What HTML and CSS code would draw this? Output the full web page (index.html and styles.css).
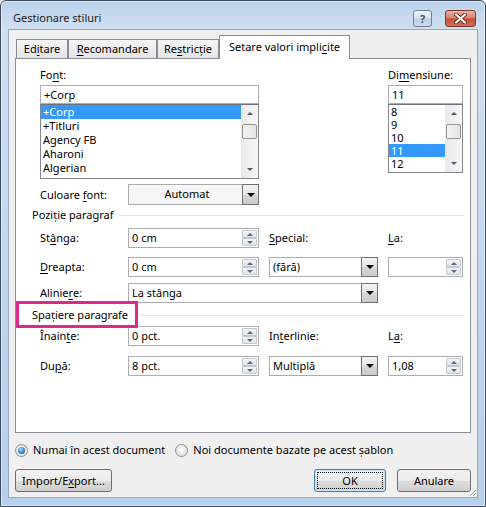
FILE: index.html
```html
<!DOCTYPE html>
<html lang="ro">
<head>
  <meta charset="UTF-8" />
  <title>Gestionare stiluri</title>
  <link rel="stylesheet" href="styles.css">
</head>
<body>
  <div class="window">
    <div class="titlebar">
      <span class="title">Gestionare stiluri</span>
      <span class="cap help">?</span>
      <span class="cap close">
        <svg width="13" height="11" viewBox="0 0 13 11">
          <path d="M2 1.5 L11 9.5 M11 1.5 L2 9.5" stroke="#6b2a22" stroke-width="4" stroke-linecap="round"/>
          <path d="M2 1.5 L11 9.5 M11 1.5 L2 9.5" stroke="#fff" stroke-width="2.2" stroke-linecap="round"/>
        </svg>
      </span>
    </div>

    <div class="client">
      <div class="tabs">
        <div class="tab t1">Ed<u>i</u>tare</div>
        <div class="tab t2"><u>R</u>ecomandare</div>
        <div class="tab t3">Re<u>s</u>tricție</div>
        <div class="tab t4 active">Setare valori impli<u>c</u>ite</div>
      </div>

      <div class="panel">
        <div class="grid fontarea">
          <div class="fontcol">
            <div class="lbl">Fo<u>n</u>t:</div>
            <div class="textbox">+Corp</div>
            <div class="listbox big">
              <ul>
                <li class="sel">+Corp</li>
                <li>+Titluri</li>
                <li>Agency FB</li>
                <li>Aharoni</li>
                <li>Algerian</li>
              </ul>
              <div class="vscroll">
                <span class="sb-btn"><i class="tri-up"></i></span>
                <span class="thumb"></span>
                <span class="sb-btn down"><i class="tri-down"></i></span>
              </div>
            </div>
          </div>
          <div class="sizecol">
            <div class="lbl">Di<u>m</u>ensiune:</div>
            <div class="textbox">11</div>
            <div class="listbox small">
              <ul>
                <li>8</li>
                <li>9</li>
                <li>10</li>
                <li class="sel">11</li>
                <li>12</li>
              </ul>
              <div class="vscroll">
                <span class="sb-btn"><i class="tri-up"></i></span>
                <span class="thumb"></span>
                <span class="sb-btn down"><i class="tri-down"></i></span>
              </div>
            </div>
          </div>
        </div>

        <div class="grid row color-row">
          <div class="lbl">Culoare <u>f</u>ont:</div>
          <div class="combo plain"><span class="val">Automat</span><span class="arrow"><i class="tri-down dark"></i></span></div>
        </div>

        <div class="group">Poziție paragraf</div>

        <div class="grid row r-stanga">
          <div class="lbl">St<u>â</u>nga:</div>
          <div class="spin"><span class="val">0 cm</span><span class="spinbtns"><span><i class="tri-up sm"></i></span><span><i class="tri-down sm"></i></span></span></div>
          <div class="lbl"><u>S</u>pecial:</div>
          <div class="lbl"><u>L</u>a:</div>
        </div>

        <div class="grid row r-dreapta">
          <div class="lbl"><u>D</u>reapta:</div>
          <div class="spin"><span class="val">0 cm</span><span class="spinbtns"><span><i class="tri-up sm"></i></span><span><i class="tri-down sm"></i></span></span></div>
          <div class="combo"><span class="val">(fără)</span><span class="arrow"><i class="tri-down dark"></i></span></div>
          <div class="spin"><span class="val"></span><span class="spinbtns"><span><i class="tri-up sm"></i></span><span><i class="tri-down sm"></i></span></span></div>
        </div>

        <div class="grid row r-aliniere">
          <div class="lbl">Alinie<u>r</u>e:</div>
          <div class="combo wide"><span class="val">La stânga</span><span class="arrow"><i class="tri-down dark"></i></span></div>
        </div>

        <div class="group spacing">
          <span class="group-text">Spațiere paragrafe</span>
          <span class="mark"></span>
        </div>

        <div class="grid row r-inainte">
          <div class="lbl">Înain<u>t</u>e:</div>
          <div class="spin"><span class="val">0 pct.</span><span class="spinbtns"><span><i class="tri-up sm"></i></span><span><i class="tri-down sm"></i></span></span></div>
          <div class="lbl">In<u>t</u>erlinie:</div>
          <div class="lbl">L<u>a</u>:</div>
        </div>

        <div class="grid row r-dupa">
          <div class="lbl">Du<u>p</u>ă:</div>
          <div class="spin"><span class="val">8 pct.</span><span class="spinbtns"><span><i class="tri-up sm"></i></span><span><i class="tri-down sm"></i></span></span></div>
          <div class="combo"><span class="val">Multiplă</span><span class="arrow"><i class="tri-down dark"></i></span></div>
          <div class="spin"><span class="val">1,08</span><span class="spinbtns"><span><i class="tri-up sm"></i></span><span><i class="tri-down sm"></i></span></span></div>
        </div>
      </div>

      <div class="options">
        <span class="radio on"><span class="dot"></span></span>
        <span class="opt-text">Numai în acest document</span>
        <span class="radio second"></span>
        <span class="opt-text">Noi documente bazate pe acest șablon</span>
      </div>

      <div class="actions">
        <button class="btn import">Import/E<u>x</u>port...</button>
        <button class="btn ok">OK</button>
        <button class="btn cancel">Anulare</button>
      </div>

      <svg class="grip" width="8" height="8" viewBox="0 0 8 8">
        <path d="M7 1 L1 7 M7 4 L4 7" stroke="#a0a8b4" stroke-width="1"/>
      </svg>
    </div>
  </div>
</body>
</html>
```

FILE: styles.css
```css
body {
  margin: 0;
  font-family: "Noto Sans", "Open Sans", sans-serif;
  font-size: 11px;
  color: #000;
  background: #fff;
}
u {
  text-decoration-thickness: 1px;
  text-underline-offset: 2px;
}
.window {
  width: 486px;
  height: 507px;
  box-sizing: border-box;
  border: 1px solid #3e4b5d;
  border-radius: 6px 6px 0 0;
  padding: 0 7px 8px;
  background: linear-gradient(to bottom, #bcd2ec 0, #d0e0f2 28px, #c0d5ee 60%, #b8cfea 100%);
  box-shadow: inset 0 0 0 1px rgba(255, 255, 255, 0.5);
}
.titlebar {
  height: 28px;
  display: flex;
  align-items: flex-start;
  padding-left: 5px;
}
.title {
  margin-top: 9px;
  line-height: 16px;
  color: #1b1b1b;
  flex: 1;
}
.cap {
  margin-top: 9px;
  height: 17px;
  box-sizing: border-box;
  border-radius: 3px;
  display: flex;
  align-items: center;
  justify-content: center;
}
.help {
  width: 19px;
  border: 1px solid #6f8199;
  background: linear-gradient(to bottom, #eef3fa 0%, #d9e4f2 45%, #bccee5 55%, #cddcee 100%);
  color: #3d4f68;
  font-weight: bold;
  font-size: 11px;
  margin-right: 13px;
}
.close {
  width: 31px;
  margin-right: 2px;
  border: 1px solid #7c3a30;
  background: linear-gradient(to bottom, #eab3a8 0%, #d9826f 45%, #c54e37 55%, #d0705a 100%);
}
.client {
  position: relative;
  height: 469px;
  box-sizing: border-box;
  background: #f0f0f0;
  border: 1px solid #93a9c4;
  padding: 5px 6px 0;
}
.tabs {
  display: flex;
  align-items: flex-end;
  height: 23px;
  padding-left: 1px;
}
.tab {
  height: 19px;
  box-sizing: border-box;
  border: 1px solid #898c95;
  border-bottom: 0;
  background: linear-gradient(to bottom, #f5f5f5, #e5e5e5);
  line-height: 18px;
  text-align: center;
}
.t1 { width: 52px; }
.t2 { width: 89px; }
.t3 { width: 62px; }
.t4 { width: 131px; }
.tab.active {
  position: relative;
  height: 24px;
  margin-bottom: -1px;
  background: #fff;
  line-height: 22px;
}
.panel {
  height: 375px;
  box-sizing: border-box;
  border: 1px solid #898c95;
  background: #fff;
  padding: 8px 6px 0 24px;
}
.grid {
  display: grid;
  grid-template-columns: 78px 131px 109px 75px;
  column-gap: 10px;
  align-items: center;
}
.fontarea {
  align-items: start;
}
.fontcol {
  grid-column: 1 / 3;
}
.sizecol {
  grid-column: 4;
}
.lbl {
  line-height: 16px;
  white-space: nowrap;
}
.fontarea .lbl {
  margin-bottom: 2px;
}
.textbox {
  height: 19px;
  box-sizing: border-box;
  border: 1px solid #abadb3;
  padding: 0 3px;
  line-height: 17px;
}
.listbox {
  display: flex;
  box-sizing: border-box;
  border: 1px solid #828790;
  border-top-color: #6e727a;
}
.listbox.big {
  height: 75px;
}
.listbox.small {
  height: 69px;
}
.listbox ul {
  flex: 1;
  margin: 0;
  padding: 0;
  list-style: none;
}
.listbox li {
  padding-left: 2px;
  line-height: 14px;
}
.listbox.small li {
  line-height: 13px;
}
.listbox li.sel {
  background: #3399ff;
  color: #fff;
}
.vscroll {
  width: 17px;
  display: flex;
  flex-direction: column;
  background: linear-gradient(to right, #e9e9e9, #f7f7f7);
}
.sb-btn {
  height: 17px;
  display: flex;
  align-items: center;
  justify-content: center;
}
.sb-btn.down {
  margin-top: auto;
}
.thumb {
  height: 15px;
  margin: 2px 1px 0;
  box-sizing: border-box;
  border: 1px solid #979797;
  border-radius: 2px;
  background: linear-gradient(to right, #f4f4f4, #e3e3e3);
}
.tri-up,
.tri-down {
  display: block;
  width: 0;
  height: 0;
  border-left: 3px solid transparent;
  border-right: 3px solid transparent;
}
.tri-up {
  border-bottom: 3px solid #5a5a5a;
}
.tri-down {
  border-top: 3px solid #5a5a5a;
}
.tri-down.dark {
  border-left-width: 4px;
  border-right-width: 4px;
  border-top: 4px solid #000;
}
.tri-up.sm {
  border-bottom: 3px solid #56688a;
}
.tri-down.sm {
  border-top: 3px solid #56688a;
}
.row {
  height: 20px;
}
.color-row {
  height: 21px;
  margin-top: 5px;
}
.combo {
  display: flex;
  height: 20px;
  box-sizing: border-box;
  border: 1px solid #abadb3;
  background: #fff;
}
.color-row .combo {
  height: 21px;
}
.combo .val {
  flex: 1;
  padding-left: 3px;
  line-height: 18px;
}
.combo.plain {
  border-color: #acacac;
  background: #f6f6f6;
}
.combo.plain .val {
  text-align: center;
}
.combo.wide {
  grid-column: 2 / 4;
}
.combo .arrow {
  width: 17px;
  margin: -1px -1px -1px 0;
  box-sizing: border-box;
  border: 1px solid #707070;
  background: linear-gradient(to bottom, #f3f3f3 0%, #e5e5e5 50%, #d6d6d6 51%, #cbcbcb 100%);
  display: flex;
  align-items: center;
  justify-content: center;
}
.spin {
  display: flex;
  height: 20px;
  box-sizing: border-box;
  border: 1px solid #abadb3;
  background: #fff;
}
.spin .val {
  flex: 1;
  padding-left: 3px;
  line-height: 18px;
}
.spinbtns {
  width: 15px;
  margin: 1px;
  display: flex;
  flex-direction: column;
}
.spinbtns span {
  flex: 1;
  box-sizing: border-box;
  border: 1px solid #c3c8d0;
  border-radius: 1px;
  background: linear-gradient(to bottom, #f4f4f4, #e2e4e8);
  display: flex;
  align-items: center;
  justify-content: center;
}
.group {
  display: flex;
  align-items: center;
  gap: 5px;
  margin: 2px 0 0 -8px;
  line-height: 16px;
}
.group::after {
  content: "";
  flex: 1;
  height: 1px;
  background: #dfe3e8;
}
.group.spacing {
  position: relative;
  margin-top: 4px;
  gap: 12px;
}
.mark {
  position: absolute;
  left: -16px;
  top: -6px;
  width: 122px;
  height: 27px;
  box-sizing: border-box;
  border: 3px solid #dc2a8c;
}
.r-stanga {
  margin-top: 5px;
}
.r-dreapta {
  margin-top: 9px;
}
.r-aliniere {
  margin-top: 6px;
}
.r-inainte {
  margin-top: 3px;
}
.r-dupa {
  margin-top: 10px;
}
.options {
  display: flex;
  align-items: center;
  height: 16px;
  margin-top: 9px;
}
.radio {
  width: 13px;
  height: 13px;
  box-sizing: border-box;
  border-radius: 50%;
  border: 1px solid #8f8f8f;
  background: radial-gradient(circle at 50% 40%, #fbfbfb, #d9d9d9);
  display: flex;
  align-items: center;
  justify-content: center;
}
.radio .dot {
  width: 7px;
  height: 7px;
  border-radius: 50%;
  background: radial-gradient(circle at 40% 35%, #a8dcf8, #2c7cc0 60%, #17467a);
}
.radio.second {
  margin-left: 10px;
}
.opt-text {
  margin-left: 5px;
  line-height: 16px;
}
.actions {
  display: flex;
  margin-top: 11px;
}
.btn {
  height: 23px;
  box-sizing: border-box;
  border: 1px solid #707070;
  border-radius: 3px;
  padding: 0;
  font: inherit;
  color: #000;
  background: linear-gradient(to bottom, #f2f2f2 0%, #ebebeb 50%, #dddddd 51%, #cfcfcf 100%);
}
.import {
  width: 97px;
}
.ok {
  width: 72px;
  margin-left: auto;
  border-color: #3c7fb1;
  outline: 1px dotted #000;
  outline-offset: -4px;
  box-shadow: inset 0 0 0 1px #cbe6f7;
}
.cancel {
  width: 74px;
  margin-left: 11px;
}
.grip {
  position: absolute;
  right: 0;
  bottom: 0;
}
```
